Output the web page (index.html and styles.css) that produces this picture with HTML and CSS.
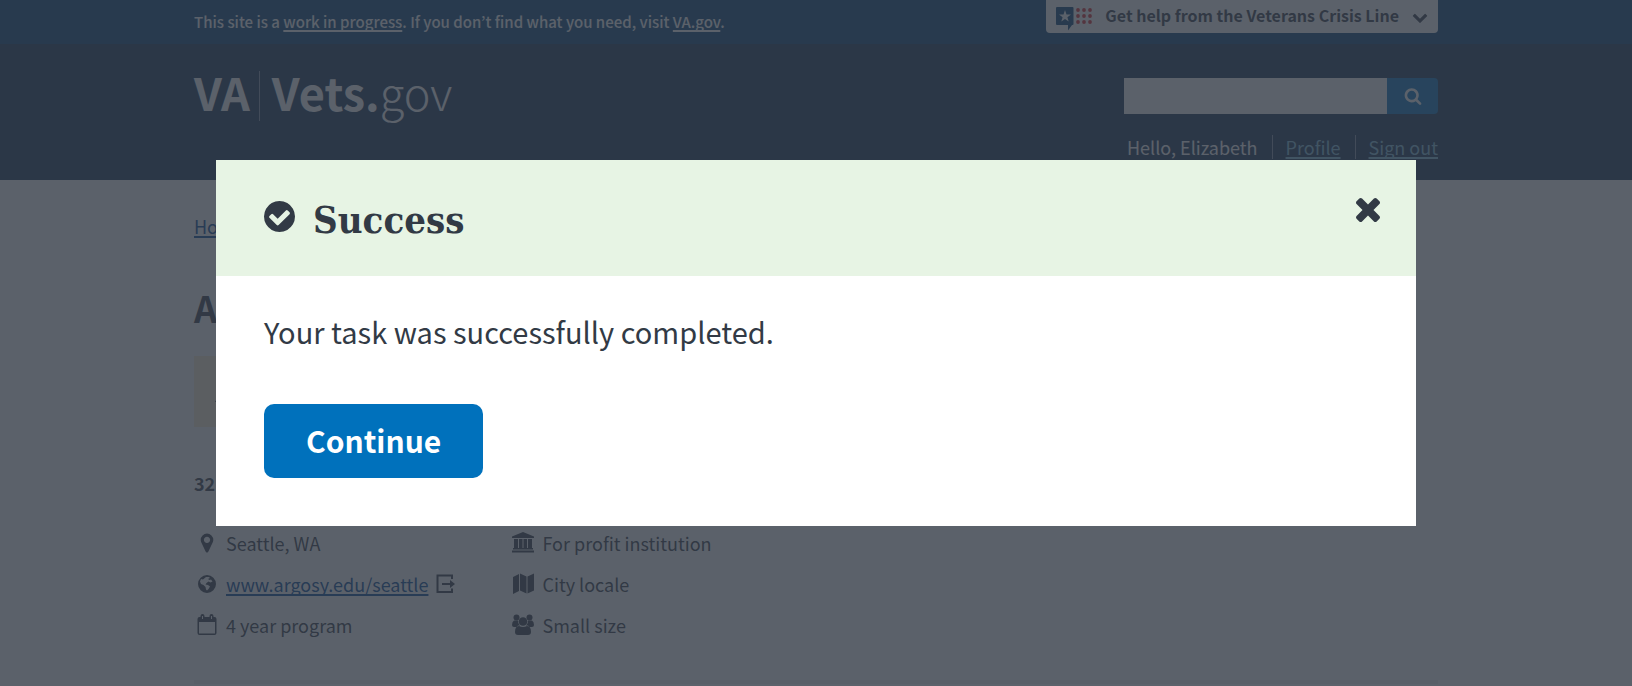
FILE: index.html
```html
<!DOCTYPE html>
<html lang="en">
<head>
<meta charset="utf-8">
<meta name="viewport" content="width=device-width, initial-scale=1">
<title>Vets.gov</title>
<link rel="stylesheet" href="styles.css">
</head>
<body>
<div class="notice">
  <div class="container notice-row">
    <p class="notice-text">This site is a <a href="#">work in progress</a>. If you don’t find what you need, visit <a href="#">VA.gov</a>.</p>
    <button class="crisis" type="button">
      <svg class="crisis-logo" viewBox="0 0 36 24" aria-hidden="true">
        <path fill="#003e73" d="M1 0h15.500q1 0 1 1v16q0 1-1 1h-.5l-4 5.500v-5.500h-11q-1 0-1-1v-16q0-1 1-1z"/>
        <path fill="#fff" d="M9 3l1.500 4.400h4.500l-3.600 2.800 1.300 4.400-3.700-2.700-3.700 2.700 1.300-4.400-3.600-2.800h4.500z"/>
        <g fill="#d8232a"><circle cx="22" cy="3" r="1.900"/><circle cx="28" cy="3" r="1.900"/><circle cx="34" cy="3" r="1.900"/><circle cx="22" cy="9" r="1.900"/><circle cx="28" cy="9" r="1.900"/><circle cx="34" cy="9" r="1.900"/><circle cx="22" cy="15" r="1.900"/><circle cx="28" cy="15" r="1.900"/><circle cx="34" cy="15" r="1.900"/></g>
      </svg>
      <span>Get help from the Veterans Crisis Line</span>
      <svg class="crisis-arrow" viewBox="0 0 1792 1792" aria-hidden="true"><path d="M1683 808l-742 741q-19 19-45 19t-45-19l-742-741q-19-19-19-45.500t19-45.500l166-165q19-19 45-19t45 19l531 531 531-531q19-19 45-19t45 19l166 165q19 19 19 45.500t-19 45.500z"/></svg>
    </button>
  </div>
</div>
<header class="masthead">
  <div class="container masthead-row">
    <a class="logo" href="#"><span class="logo-va">VA</span><span class="logo-name"><b>Vets.</b>gov</span></a>
    <div class="tools">
      <form class="search">
        <input type="search" aria-label="Search">
        <button type="button" aria-label="Search"><svg viewBox="0 0 1792 1792" aria-hidden="true"><path d="M1216 832q0-185-131.500-316.500t-316.500-131.500-316.500 131.500-131.500 316.500 131.500 316.500 316.500 131.500 316.500-131.500 131.500-316.500zm512 832q0 52-38 90t-90 38q-54 0-90-38l-343-342q-179 124-399 124-143 0-273.500-55.500t-225-150-150-225-55.500-273.500 55.500-273.500 150-225 225-150 273.500-55.500 273.500 55.500 225 150 150 225 55.500 273.500q0 220-124 399l343 343q37 37 37 90z"/></svg></button>
      </form>
      <nav class="account">
        <span>Hello, Elizabeth</span>
        <span><a href="#">Profile</a></span>
        <span><a href="#">Sign out</a></span>
      </nav>
    </div>
  </div>
</header>
<main class="container page">
  <nav class="crumbs"><a href="#">Ho</a></nav>
  <h1 class="title">A</h1>
  <div class="caution"><svg viewBox="0 0 24 24" aria-hidden="true"><path d="M12 2l11 20h-22z"/></svg></div>
  <p class="count">32</p>
  <div class="facts">
    <ul>
      <li><svg viewBox="0 0 1792 1792" aria-hidden="true"><path d="M1152 640q0-106-75-181t-181-75-181 75-75 181 75 181 181 75 181-75 75-181zm256 0q0 109-33 179l-364 774q-16 33-47.500 52t-67.500 19-67.500-19-46.500-52l-365-774q-33-70-33-179 0-212 150-362t362-150 362 150 150 362z"/></svg>Seattle, WA</li>
      <li><svg viewBox="0 0 22 22" aria-hidden="true"><path fill-rule="evenodd" d="M11 2a9 9 0 1 0 0 18a9 9 0 1 0 0-18zM10 4l3 0 1 1-2 1 1.500 1 1.500-.500 1.500 2-2 1-2-1-2 1.500-1 1.500 2.500 .500 2 1.500-1.500 2.500-1.500 1.500-1-1-.500-2.500-2-2-2.500-1-1-2.500 1-2.500 2 .500z"/></svg><a href="#">www.argosy.edu/seattle</a><svg class="exit" viewBox="0 0 20 20" aria-hidden="true"><path fill="none" stroke="#323a45" stroke-width="2" d="M16 5v-3.500h-14.500v16.500h14.500v-3.500M6 10h10"/><path d="M14 6l5 4-5 4z"/></svg></li>
      <li><svg viewBox="0 0 22 22" aria-hidden="true"><path fill-rule="evenodd" d="M3.500 3h1v-1q0-2 2-2t2 2v1h5v-1q0-2 2-2t2 2v1h1q2 0 2 2v14q0 2-2 2h-15q-2 0-2-2v-14q0-2 2-2zM3 8v11.500h16v-11.500zM6 2v3h1v-3zM15 2v3h1v-3z"/></svg>4 year program</li>
    </ul>
    <ul>
      <li><svg viewBox="0 0 22 22" aria-hidden="true"><path d="M11 0l11 4.500v1.500h-22v-1.500zM2 7h4v9h1v-9h3.500v9h1v-9h3.500v9h1v-9h4v9h1v1.500h-20v-1.500h1zM0 18.500h22v2h-22z"/></svg>For profit institution</li>
      <li><svg viewBox="0 0 22 22" aria-hidden="true"><path d="M1 4l6-3v17l-6 3zM8 .500l6.500 3v17l-6.500-3zM15.500 3.500l6.500-3v17l-6.500 3z"/></svg>City locale</li>
      <li><svg viewBox="0 0 22 22" aria-hidden="true"><circle cx="4.500" cy="3.500" r="3"/><circle cx="17.500" cy="3.500" r="3"/><circle cx="11" cy="7.500" r="4.300"/><path d="M2 6.500h4q-.500 3 2 5h-2l-1.500 1.500h-2.500q-2 0-2-2 0-3.500 2-4.500zM20 6.500h-4q.500 3-2 5h2l1.500 1.500h2.500q2 0 2-2 0-3.500-2-4.500zM7 12q4 2 8 0 4 0 4 6 0 3-3 3h-10q-3 0-3-3 0-6 4-6z"/></svg>Small size</li>
    </ul>
  </div>
  <div class="panel"></div>
</main>
<div class="overlay">
  <section class="modal" role="dialog" aria-modal="true" aria-labelledby="modal-title">
    <div class="modal-head">
      <svg class="check" viewBox="128 128 1536 1536" aria-hidden="true"><path d="M1412 734q0-28-18-46l-91-90q-19-19-45-19t-45 19l-408 407-226-226q-19-19-45-19t-45 19l-91 90q-18 18-18 46 0 27 18 45l362 362q19 19 45 19 27 0 46-19l543-543q18-18 18-45zm252 162q0 209-103 385.500t-279.500 279.500-385.500 103-385.500-103-279.500-279.500-103-385.500 103-385.500 279.500-279.500 385.500-103 385.500 103 279.500 279.500 103 385.500z"/></svg>
      <h2 id="modal-title">Success</h2>
      <button class="close" type="button" aria-label="Close"><svg viewBox="302 366 1188 1188" aria-hidden="true"><path d="M1490 1322q0 40-28 68l-136 136q-28 28-68 28t-68-28l-294-294-294 294q-28 28-68 28t-68-28l-136-136q-28-28-28-68t28-68l294-294-294-294q-28-28-28-68t28-68l136-136q28-28 68-28t68 28l294 294 294-294q28-28 68-28t68 28l136 136q28 28 28 68t-28 68l-294 294 294 294q28 28 28 68z"/></svg></button>
    </div>
    <div class="modal-body">
      <p>Your task was successfully completed.</p>
      <button class="primary" type="button">Continue</button>
    </div>
  </section>
</div>
</body>
</html>
```
FILE: styles.css
```css
* { box-sizing: border-box; }
body {
  margin: 0;
  background: #fff;
  color: #323a45;
  font: 18px/28px "Noto Sans CJK KR", "Open Sans", sans-serif;
}
p, h1, h2, ul { margin: 0; padding: 0; }
ul { list-style: none; }
svg { display: block; flex: none; fill: #323a45; }
button, input { border: 0; padding: 0; font: inherit; color: inherit; }
a {
  color: #004795;
  text-decoration-thickness: 2px;
  text-decoration-skip-ink: none;
  text-underline-offset: 2px;
}
.container { max-width: 1292px; margin: 0 auto; padding: 0 24px; }

.notice { background: #003e73; }
.notice-row { display: flex; justify-content: space-between; align-items: flex-start; min-height: 44px; }
.notice-text { padding-top: 12px; font-size: 15px; line-height: 20px; font-weight: 500; color: #fff; }
.notice-text a { color: inherit; }
.crisis {
  display: flex;
  align-items: center;
  gap: 13px;
  height: 33px;
  padding: 0 10px;
  border-radius: 0 0 4px 4px;
  background: #fff;
  font-size: 16px;
  line-height: 28px;
  font-weight: 700;
}
.crisis span { padding-bottom: 4px; }
.crisis-logo { width: 36px; height: 24px; margin-top: 4px; }
.crisis-arrow { width: 16px; height: 16px; }

.masthead { min-height: 136px; background: #112e51; color: #fff; }
.masthead-row { display: flex; justify-content: space-between; align-items: flex-start; }
.logo { display: flex; margin-top: 27px; color: #fff; text-decoration: none; font-size: 45px; line-height: 42px; }
.logo-va { padding: 0 9px 8px 0; border-right: 1px solid #8292a8; font-weight: 700; }
.logo-name { padding-left: 12px; font-weight: 300; }
.logo-name b { font-weight: 700; }
.tools { padding-top: 34px; }
.search { display: flex; justify-content: flex-end; }
.search input { width: 263px; height: 36px; background: #fff; border-radius: 0; }
.search button { display: grid; place-items: center; width: 51px; border-radius: 0 4px 4px 0; background: #0071bc; }
.search svg { width: 18px; height: 18px; fill: #fff; }
.account { display: flex; justify-content: flex-end; margin-top: 21px; line-height: 24px; }
.account > * + * { margin-left: 14px; padding-left: 13px; border-left: 1px solid #8292a8; }
.account a { color: #7fbfdc; }

.crumbs { padding-top: 32px; }
.title { margin-top: 45px; font-size: 36px; line-height: 44px; font-weight: 700; }
.caution { display: flex; align-items: center; max-width: 800px; height: 71px; margin-top: 27px; padding-left: 20px; background: #fff1d2; }
.caution svg { width: 24px; height: 24px; }
.count { margin-top: 42px; font-weight: 700; }
.facts { display: flex; gap: 54px; margin-top: 32px; }
.facts ul { display: grid; gap: 13px; }
.facts li { display: flex; align-items: center; gap: 8px; padding-left: 2px; }
.facts svg { width: 22px; height: 22px; }
.facts .exit { width: 20px; height: 20px; }
.panel { height: 4px; margin-top: 41px; background: #f1f1f1; }

.overlay {
  position: fixed;
  inset: 0;
  display: grid;
  place-items: center;
  background: rgba(50, 58, 69, .8);
}
.modal { width: calc(100% - 48px); max-width: 1200px; background: #fff; }
.modal-head { display: flex; align-items: center; padding: 32px 36px 32px 48px; background: #e7f4e4; }
.check { width: 31px; height: 31px; margin-bottom: 3px; }
.modal-head h2 { flex: 1; padding: 3px 0 0 18px; font: 700 38px/49px "DejaVu Serif Condensed", "DejaVu Serif", serif; }
.close { align-self: flex-start; margin-top: 6px; background: none; }
.close svg { width: 24px; height: 24px; }
.modal-body { padding: 33px 48px 48px; }
.modal-body p { font-size: 29px; line-height: 44px; }
.primary {
  margin-top: 51px;
  padding: 0 42px 2px;
  border-radius: 10px;
  background: #0071bc;
  color: #fff;
  font-size: 30px;
  line-height: 72px;
  font-weight: 700;
}
```
